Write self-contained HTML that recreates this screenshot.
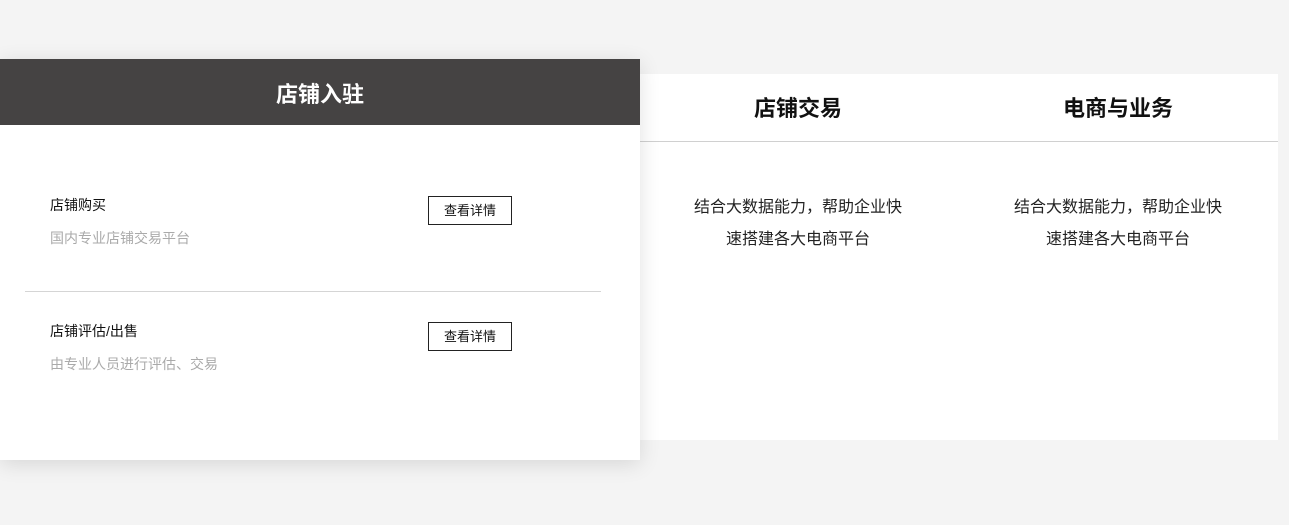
<!DOCTYPE html>
<html><head><meta charset="utf-8"><style>
body{margin:0;width:1289px;height:525px;background:#f4f4f4;position:relative;overflow:hidden;font-family:"Liberation Sans","Noto Sans CJK SC",sans-serif;}
.panel{position:absolute;left:0;top:74px;width:1278px;height:366px;background:#fff;}
.hline{position:absolute;left:0;top:67px;width:1278px;height:1px;background:#d0d0d0;}
.col{position:absolute;top:0;width:320px;text-align:center;}
.col h2{margin:0;position:absolute;top:20px;width:100%;font-size:22px;font-weight:bold;color:#111;line-height:30px;}
.col p{margin:0;position:absolute;top:118px;width:100%;font-size:16px;color:#222;line-height:32px;}
.card{position:absolute;left:0;top:59px;width:640px;height:401px;background:#fff;box-shadow:0 4px 20px rgba(0,0,0,.12);}
.head{height:66px;background:#454343;color:#fff;font-size:22px;font-weight:bold;text-align:center;line-height:72px;}
.t{position:absolute;left:50px;font-size:14px;color:#111;}
.s{position:absolute;left:50px;font-size:14px;color:#aaa;}
.btn{position:absolute;left:428px;width:82px;height:27px;border:1px solid #222;font-size:13px;text-align:center;line-height:28px;color:#111;box-sizing:content-box;}
.div{position:absolute;left:25px;top:232px;width:576px;height:1px;background:#d5d5d5;}
</style></head><body>
<div class="panel">
<div class="hline"></div>
<div class="col" style="left:638px"><h2>店铺交易</h2><p>结合大数据能力，帮助企业快<br>速搭建各大电商平台</p></div>
<div class="col" style="left:958px"><h2>电商与业务</h2><p>结合大数据能力，帮助企业快<br>速搭建各大电商平台</p></div>
</div>
<div class="card">
<div class="head">店铺入驻</div>
<div class="t" style="top:136px">店铺购买</div>
<div class="s" style="top:169px">国内专业店铺交易平台</div>
<div class="btn" style="top:137px">查看详情</div>
<div class="div"></div>
<div class="t" style="top:262px">店铺评估/出售</div>
<div class="s" style="top:295px">由专业人员进行评估、交易</div>
<div class="btn" style="top:263px">查看详情</div>
</div>
</body></html>
